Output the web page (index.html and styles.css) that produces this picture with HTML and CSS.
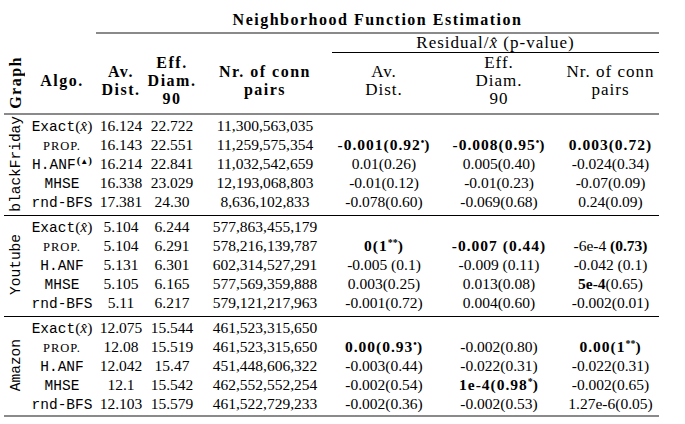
FILE: index.html
```html
<!DOCTYPE html>
<html>
<head>
<meta charset="utf-8">
<link rel="stylesheet" href="styles.css">
</head>
<body>
<div class="table">
  <div class="head grid">
    <div class="title">Neighborhood Function Estimation</div>
    <div class="graph-h"><span class="rot hb">Graph</span></div>
    <div class="resid">Residual/<i>x̂</i> (p-value)</div>
    <div class="h hb c2">Algo.</div>
    <div class="h hb">Av.<br>Dist.</div>
    <div class="h hb">Eff.<br>Diam.<br>90</div>
    <div class="h hb">Nr. of conn<br>pairs</div>
    <div class="h hr">Av.<br>Dist.</div>
    <div class="h hr">Eff.<br>Diam.<br>90</div>
    <div class="h hr">Nr. of conn<br>pairs</div>
  </div>

  <div class="sec grid">
    <div class="label"><span class="rot tt">blackFriday</span></div>
    <div><span class="tt">Exact</span>(<i>x̂</i>)</div><div>16.124</div><div>22.722</div><div>11,300,563,035</div><div></div><div></div><div></div>
    <div><span class="sc">PROP.</span></div><div>16.143</div><div>22.551</div><div>11,259,575,354</div><div class="b">-0.001(0.92<sup>•</sup>)</div><div class="b">-0.008(0.95<sup>•</sup>)</div><div class="b">0.003(0.72)</div>
    <div><span class="tt">H.ANF</span><sup class="tri">(<span>▲</span>)</sup></div><div>16.214</div><div>22.841</div><div>11,032,542,659</div><div>0.01(0.26)</div><div>0.005(0.40)</div><div>-0.024(0.34)</div>
    <div><span class="tt">MHSE</span></div><div>16.338</div><div>23.029</div><div>12,193,068,803</div><div>-0.01(0.12)</div><div>-0.01(0.23)</div><div>-0.07(0.09)</div>
    <div><span class="tt">rnd-BFS</span></div><div>17.381</div><div>24.30</div><div>8,636,102,833</div><div>-0.078(0.60)</div><div>-0.069(0.68)</div><div>0.24(0.09)</div>
  </div>

  <div class="sec grid">
    <div class="label"><span class="rot tt">Youtube</span></div>
    <div><span class="tt">Exact</span>(<i>x̂</i>)</div><div>5.104</div><div>6.244</div><div>577,863,455,179</div><div></div><div></div><div></div>
    <div><span class="sc">PROP.</span></div><div>5.104</div><div>6.291</div><div>578,216,139,787</div><div class="b">0(1<sup>**</sup>)</div><div class="b">-0.007 (0.44)</div><div>-6e-4 <b>(0.73)</b></div>
    <div><span class="tt">H.ANF</span></div><div>5.131</div><div>6.301</div><div>602,314,527,291</div><div>-0.005 (0.1)</div><div>-0.009 (0.11)</div><div>-0.042 (0.1)</div>
    <div><span class="tt">MHSE</span></div><div>5.105</div><div>6.165</div><div>577,569,359,888</div><div>0.003(0.25)</div><div>0.013(0.08)</div><div><b>5e-4</b>(0.65)</div>
    <div><span class="tt">rnd-BFS</span></div><div>5.11</div><div>6.217</div><div>579,121,217,963</div><div>-0.001(0.72)</div><div>0.004(0.60)</div><div>-0.002(0.01)</div>
  </div>

  <div class="sec last grid">
    <div class="label"><span class="rot tt">Amazon</span></div>
    <div><span class="tt">Exact</span>(<i>x̂</i>)</div><div>12.075</div><div>15.544</div><div>461,523,315,650</div><div></div><div></div><div></div>
    <div><span class="sc">PROP.</span></div><div>12.08</div><div>15.519</div><div>461,523,315,650</div><div class="b">0.00(0.93<sup>•</sup>)</div><div>-0.002(0.80)</div><div class="b">0.00(1<sup>**</sup>)</div>
    <div><span class="tt">H.ANF</span></div><div>12.042</div><div>15.47</div><div>451,448,606,322</div><div>-0.003(0.44)</div><div>-0.022(0.31)</div><div>-0.022(0.31)</div>
    <div><span class="tt">MHSE</span></div><div>12.1</div><div>15.542</div><div>462,552,552,254</div><div>-0.002(0.54)</div><div class="b">1e-4(0.98<sup>*</sup>)</div><div>-0.002(0.65)</div>
    <div><span class="tt">rnd-BFS</span></div><div>12.103</div><div>15.579</div><div>461,522,729,233</div><div>-0.002(0.36)</div><div>-0.002(0.53)</div><div>1.27e-6(0.05)</div>
  </div>
</div>
</body>
</html>
```

FILE: styles.css
```css
html, body {
  margin: 0;
  background: #fff;
}
body {
  font-family: "Liberation Serif", "Times New Roman", serif;
  font-size: 15.5px;
  line-height: 19px;
  color: #000;
}
.table {
  width: 655px;
  padding: 8px 0 0 4px;
}
.grid {
  display: grid;
  grid-template-columns: 24px 68px 50px 52px 134px 104px 126px 97px;
  text-align: center;
  white-space: nowrap;
}
.head {
  line-height: 18px;
  border-bottom: 2px solid #8a8a8a;
}
.title {
  grid-column: 3 / -1;
  grid-row: 1;
  font-weight: bold;
  font-size: 16px;
  letter-spacing: 1.5px;
  padding: 3px 0 3px;
  border-bottom: 2px solid #8a8a8a;
}
.graph-h {
  grid-column: 1;
  grid-row: 2 / 4;
  display: flex;
  align-items: flex-end;
  justify-content: center;
  padding-bottom: 4px;
}
.resid {
  grid-column: 6 / -1;
  grid-row: 2;
  font-size: 17px;
  letter-spacing: 1px;
  border-bottom: 1px solid #000;
}
.h {
  grid-row: 3;
  display: flex;
  flex-direction: column;
  justify-content: center;
  padding: 1px 0 5px;
}
.hb {
  font-weight: bold;
  font-size: 16px;
  letter-spacing: 1.5px;
}
.hr {
  font-size: 17px;
  letter-spacing: 1px;
}
.c2 {
  grid-column: 2;
}
.b {
  font-weight: bold;
  letter-spacing: 1px;
}
.sec {
  grid-auto-rows: 19px;
  border-bottom: 1px solid #000;
  padding: 1px 0 4px;
}
.sec.last {
  border-bottom: 2px solid #8a8a8a;
  padding-bottom: 2px;
}
.label {
  grid-column: 1;
  grid-row: 1 / 6;
  display: flex;
  align-items: center;
  justify-content: center;
}
.rot {
  writing-mode: vertical-rl;
  transform: rotate(180deg);
}
.tt {
  font-family: "Liberation Mono", "DejaVu Sans Mono", monospace;
  font-size: 14.5px;
  line-height: 1;
}
.sc {
  font-size: 12.5px;
  letter-spacing: 1px;
  line-height: 1;
}
sup {
  font-size: 10px;
  line-height: 0;
  vertical-align: 5px;
  letter-spacing: 0;
}
.tri {
  font-size: 11px;
  font-weight: bold;
  margin-left: 1px;
}
.tri span {
  font-size: 8px;
}
```
